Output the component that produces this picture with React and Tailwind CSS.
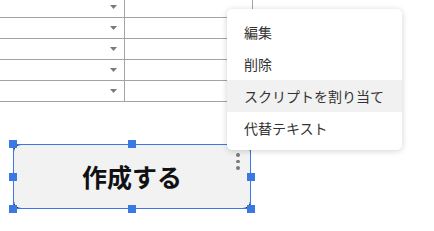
export default function App() {
    const rows = [0, 1, 2, 3, 4];
    const menu = ['編集', '削除', 'スクリプトを割り当て', '代替テキスト'];

    return (
        <div
            className="relative h-[231px] w-[434px] overflow-hidden bg-white"
            style={{ fontFamily: '"Noto Sans CJK JP", "Noto Sans", sans-serif' }}
        >
            {/* sheet rows */}
            <div className="-mt-[3px] w-[253px]">
                {rows.map((r) => (
                    <div key={r} className="flex h-[21px] border-b border-[#a3a3a3]">
                        <div className="flex w-[125px] items-center justify-end border-r border-[#a3a3a3] pr-[7px]">
                            <svg width="7" height="4" viewBox="0 0 7 4">
                                <path d="M0 0h7L3.5 4z" fill="#7a7a7a" />
                            </svg>
                        </div>
                        <div className="w-[128px] border-r border-[#a3a3a3]" />
                    </div>
                ))}
            </div>

            {/* drawing button */}
            <div className="ml-[13px] mt-[42px] h-[65px] w-[238px]">
                <div className="relative flex h-full w-full items-center justify-center rounded-[8px] border border-[#333] bg-[#f2f2f2]">
                    <span className="text-[25px] font-bold leading-none text-[#111]">作成する</span>
                    <div className="absolute left-[222px] top-[8px] flex flex-col gap-[3px]">
                        <span className="h-[3.5px] w-[3.5px] rounded-full bg-[#7a7a7a]" />
                        <span className="h-[3.5px] w-[3.5px] rounded-full bg-[#7a7a7a]" />
                        <span className="h-[3.5px] w-[3.5px] rounded-full bg-[#7a7a7a]" />
                    </div>
                    <div className="absolute -inset-px border border-[#3a78e4]" />
                    <span className="absolute -left-[5px] -top-[5px] h-2 w-2 bg-[#3a78e4]" />
                    <span className="absolute left-[114px] -top-[5px] h-2 w-2 bg-[#3a78e4]" />
                    <span className="absolute -right-[5px] -top-[5px] h-2 w-2 bg-[#3a78e4]" />
                    <span className="absolute -left-[5px] top-[28px] h-2 w-2 bg-[#3a78e4]" />
                    <span className="absolute -right-[5px] top-[28px] h-2 w-2 bg-[#3a78e4]" />
                    <span className="absolute -bottom-[5px] -left-[5px] h-2 w-2 bg-[#3a78e4]" />
                    <span className="absolute -bottom-[5px] left-[114px] h-2 w-2 bg-[#3a78e4]" />
                    <span className="absolute -bottom-[5px] -right-[5px] h-2 w-2 bg-[#3a78e4]" />
                </div>
            </div>

            {/* context menu */}
            <div className="absolute left-[227px] top-[9px] w-[175px] rounded-[5px] bg-white pb-[6px] pt-[7px] shadow-[0_1px_6px_rgba(0,0,0,0.18)]">
                {menu.map((item, i) => (
                    <div
                        key={item}
                        className={
                            i === 2
                                ? 'flex h-8 items-center bg-[#f1f1f1] px-[17px] text-[14px] text-[#333]'
                                : 'flex h-8 items-center px-[17px] text-[14px] text-[#333]'
                        }
                    >
                        {item}
                    </div>
                ))}
            </div>
        </div>
    );
}
